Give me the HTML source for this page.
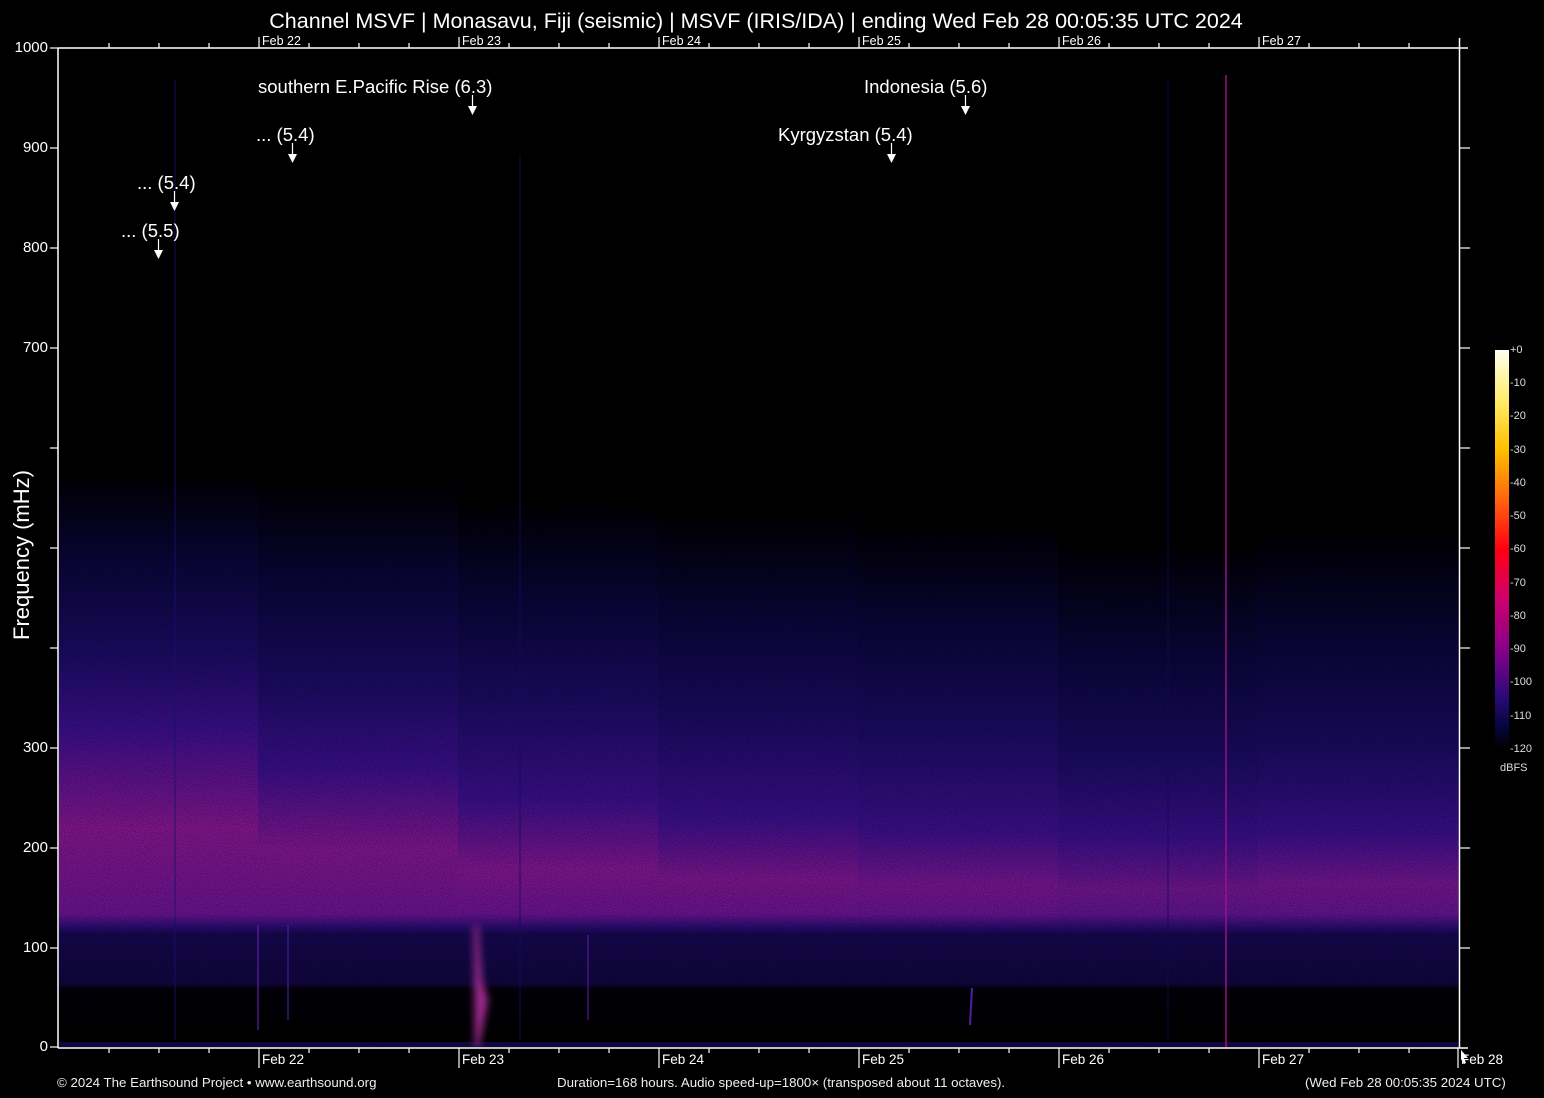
<!DOCTYPE html>
<html><head><meta charset="utf-8"><style>
html,body{margin:0;padding:0;background:#000;}
body{width:1544px;height:1098px;position:relative;overflow:hidden;font-family:"Liberation Sans",Arial,sans-serif;color:#fff;}
.t{position:absolute;white-space:nowrap;}
.yl{position:absolute;left:0;width:48px;text-align:right;font-size:15px;}
</style></head><body>
<svg width="1544" height="1098" style="position:absolute;left:0;top:0" xmlns="http://www.w3.org/2000/svg">
<defs>
<clipPath id="pc"><rect x="59" y="48" width="1400" height="999"/></clipPath>
<filter id="b3" filterUnits="userSpaceOnUse" x="-200" y="-200" width="2000" height="1500"><feGaussianBlur stdDeviation="4"/></filter>
<filter id="noise" filterUnits="userSpaceOnUse" x="0" y="0" width="1544" height="1098"><feTurbulence type="fractalNoise" baseFrequency="0.9" numOctaves="1" seed="3"/><feColorMatrix values="0 0 0 0 0  0 0 0 0 0  0 0 0 0 0  0 0 0 -1.6 1.1"/></filter>
<linearGradient id="cb" x1="0" y1="0" x2="0" y2="1">
<stop offset="0" stop-color="#fffff0"/><stop offset="0.12" stop-color="#ffee70"/><stop offset="0.25" stop-color="#ffc000"/><stop offset="0.38" stop-color="#ff6010"/><stop offset="0.5" stop-color="#ff0010"/><stop offset="0.62" stop-color="#d0006a"/><stop offset="0.75" stop-color="#8a008a"/><stop offset="0.87" stop-color="#2a0a7a"/><stop offset="0.95" stop-color="#050538"/><stop offset="1" stop-color="#000"/>
</linearGradient>
<linearGradient id="g1" x1="0" y1="0" x2="0" y2="1">
<stop offset=".422" stop-color="#000"/><stop offset=".512" stop-color="#0a0538"/><stop offset=".602" stop-color="#1a0b62"/><stop offset=".682" stop-color="#3a0f8a"/><stop offset=".782" stop-color="#84168e"/><stop offset=".867" stop-color="#6a1490"/><stop offset=".880" stop-color="#2a0c70"/><stop offset=".887" stop-color="#160850"/><stop offset=".937" stop-color="#10063e"/><stop offset=".942" stop-color="#020108"/><stop offset="1" stop-color="#000"/>
</linearGradient>
<linearGradient id="g2" x1="0" y1="0" x2="0" y2="1">
<stop offset=".432" stop-color="#000"/><stop offset=".532" stop-color="#0a0538"/><stop offset=".632" stop-color="#1a0b62"/><stop offset=".722" stop-color="#3a0f8a"/><stop offset=".802" stop-color="#80168e"/><stop offset=".867" stop-color="#6a1490"/><stop offset=".880" stop-color="#2a0c70"/><stop offset=".887" stop-color="#160850"/><stop offset=".937" stop-color="#10063e"/><stop offset=".942" stop-color="#020108"/><stop offset="1" stop-color="#000"/>
</linearGradient>
<linearGradient id="g3" x1="0" y1="0" x2="0" y2="1">
<stop offset=".452" stop-color="#000"/><stop offset=".552" stop-color="#0a0538"/><stop offset=".652" stop-color="#1a0b62"/><stop offset=".752" stop-color="#3a0f8a"/><stop offset=".822" stop-color="#80168e"/><stop offset=".867" stop-color="#6a1490"/><stop offset=".880" stop-color="#2a0c70"/><stop offset=".887" stop-color="#160850"/><stop offset=".937" stop-color="#10063e"/><stop offset=".942" stop-color="#020108"/><stop offset="1" stop-color="#000"/>
</linearGradient>
<linearGradient id="g4" x1="0" y1="0" x2="0" y2="1">
<stop offset=".462" stop-color="#000"/><stop offset=".567" stop-color="#0a0538"/><stop offset=".672" stop-color="#1a0b62"/><stop offset=".772" stop-color="#3a0f8a"/><stop offset=".832" stop-color="#7c168e"/><stop offset=".867" stop-color="#6a1490"/><stop offset=".880" stop-color="#2a0c70"/><stop offset=".887" stop-color="#160850"/><stop offset=".937" stop-color="#10063e"/><stop offset=".942" stop-color="#020108"/><stop offset="1" stop-color="#000"/>
</linearGradient>
<linearGradient id="g5" x1="0" y1="0" x2="0" y2="1">
<stop offset=".472" stop-color="#000"/><stop offset=".577" stop-color="#0a0538"/><stop offset=".682" stop-color="#1a0b62"/><stop offset=".782" stop-color="#3a0f8a"/><stop offset=".837" stop-color="#76168e"/><stop offset=".867" stop-color="#661490"/><stop offset=".880" stop-color="#2a0c70"/><stop offset=".887" stop-color="#160850"/><stop offset=".937" stop-color="#10063e"/><stop offset=".942" stop-color="#020108"/><stop offset="1" stop-color="#000"/>
</linearGradient>
<linearGradient id="g6" x1="0" y1="0" x2="0" y2="1">
<stop offset=".492" stop-color="#000"/><stop offset=".602" stop-color="#0a0538"/><stop offset=".712" stop-color="#1a0b62"/><stop offset=".792" stop-color="#3a0f8a"/><stop offset=".842" stop-color="#70168e"/><stop offset=".867" stop-color="#601490"/><stop offset=".880" stop-color="#2a0c70"/><stop offset=".887" stop-color="#160850"/><stop offset=".937" stop-color="#10063e"/><stop offset=".942" stop-color="#020108"/><stop offset="1" stop-color="#000"/>
</linearGradient>
<linearGradient id="g7" x1="0" y1="0" x2="0" y2="1">
<stop offset=".482" stop-color="#000"/><stop offset=".592" stop-color="#0a0538"/><stop offset=".702" stop-color="#1a0b62"/><stop offset=".787" stop-color="#3a0f8a"/><stop offset=".837" stop-color="#74168e"/><stop offset=".867" stop-color="#641490"/><stop offset=".880" stop-color="#2a0c70"/><stop offset=".887" stop-color="#160850"/><stop offset=".937" stop-color="#10063e"/><stop offset=".942" stop-color="#020108"/><stop offset="1" stop-color="#000"/>
</linearGradient>
</defs>
<g clip-path="url(#pc)">
<rect x="58" y="48" width="201" height="999" fill="url(#g1)"/>
<rect x="258" y="48" width="201" height="999" fill="url(#g2)"/>
<rect x="458" y="48" width="201" height="999" fill="url(#g3)"/>
<rect x="658" y="48" width="201" height="999" fill="url(#g4)"/>
<rect x="858" y="48" width="201" height="999" fill="url(#g5)"/>
<rect x="1058" y="48" width="201" height="999" fill="url(#g6)"/>
<rect x="1258" y="48" width="202" height="999" fill="url(#g7)"/>
<rect x="0" y="1042" width="1600" height="5" fill="#120848"/>
<rect x="58" y="48" width="1402" height="1000" filter="url(#noise)" opacity="0.45"/>
<line x1="1226" y1="75" x2="1226" y2="1047" stroke="#a01080" stroke-width="1.5"/>
<line x1="175" y1="80" x2="175" y2="1040" stroke="#1a1070" stroke-width="1.2" opacity="0.7"/>
<line x1="520" y1="155" x2="520" y2="1040" stroke="#160c5a" stroke-width="1.2" opacity="0.7"/>
<line x1="1168" y1="80" x2="1168" y2="1040" stroke="#120c50" stroke-width="1.2" opacity="0.7"/>
<line x1="258" y1="925" x2="258" y2="1030" stroke="#6020a0" stroke-width="1.2"/>
<line x1="288" y1="925" x2="288" y2="1020" stroke="#4a1a90" stroke-width="1.2"/>
<line x1="588" y1="935" x2="588" y2="1020" stroke="#501a90" stroke-width="1.2"/>
<path d="M474,925 L478,925 L482,980 L488,1000 L479,1047 L475,1047 Z" fill="#a02a90" filter="url(#b3)"/>
<line x1="972" y1="988" x2="970" y2="1025" stroke="#5020a0" stroke-width="2"/>
</g>
<g stroke="#fff" stroke-width="1.5" fill="none">
<line x1="58" y1="48" x2="1468" y2="48"/>
<line x1="58" y1="48" x2="58" y2="1048"/>
<line x1="58" y1="1048" x2="1468" y2="1048"/>
<line x1="1459.5" y1="38" x2="1459.5" y2="1048"/>
</g>
<g stroke="#fff" stroke-width="1.2">
<line x1="50" y1="48" x2="58" y2="48"/><line x1="50" y1="148" x2="58" y2="148"/><line x1="50" y1="248" x2="58" y2="248"/><line x1="50" y1="348" x2="58" y2="348"/><line x1="50" y1="448" x2="58" y2="448"/><line x1="50" y1="548" x2="58" y2="548"/><line x1="50" y1="648" x2="58" y2="648"/><line x1="50" y1="748" x2="58" y2="748"/><line x1="50" y1="848" x2="58" y2="848"/><line x1="50" y1="948" x2="58" y2="948"/><line x1="50" y1="1047" x2="58" y2="1047"/>
<line x1="1460" y1="148" x2="1470" y2="148"/><line x1="1460" y1="248" x2="1470" y2="248"/><line x1="1460" y1="348" x2="1470" y2="348"/><line x1="1460" y1="448" x2="1470" y2="448"/><line x1="1460" y1="548" x2="1470" y2="548"/><line x1="1460" y1="648" x2="1470" y2="648"/><line x1="1460" y1="748" x2="1470" y2="748"/><line x1="1460" y1="848" x2="1470" y2="848"/><line x1="1460" y1="948" x2="1470" y2="948"/>
</g>
<g stroke="#fff" stroke-width="1.2">
<line x1="109" y1="1048" x2="109" y2="1053"/><line x1="159" y1="1048" x2="159" y2="1053"/><line x1="209" y1="1048" x2="209" y2="1053"/>
<line x1="259" y1="1048" x2="259" y2="1068"/><line x1="309" y1="1048" x2="309" y2="1053"/><line x1="359" y1="1048" x2="359" y2="1053"/><line x1="409" y1="1048" x2="409" y2="1053"/>
<line x1="459" y1="1048" x2="459" y2="1068"/><line x1="509" y1="1048" x2="509" y2="1053"/><line x1="559" y1="1048" x2="559" y2="1053"/><line x1="609" y1="1048" x2="609" y2="1053"/>
<line x1="659" y1="1048" x2="659" y2="1068"/><line x1="709" y1="1048" x2="709" y2="1053"/><line x1="759" y1="1048" x2="759" y2="1053"/><line x1="809" y1="1048" x2="809" y2="1053"/>
<line x1="859" y1="1048" x2="859" y2="1068"/><line x1="909" y1="1048" x2="909" y2="1053"/><line x1="959" y1="1048" x2="959" y2="1053"/><line x1="1009" y1="1048" x2="1009" y2="1053"/>
<line x1="1059" y1="1048" x2="1059" y2="1068"/><line x1="1109" y1="1048" x2="1109" y2="1053"/><line x1="1159" y1="1048" x2="1159" y2="1053"/><line x1="1209" y1="1048" x2="1209" y2="1053"/>
<line x1="1259" y1="1048" x2="1259" y2="1068"/><line x1="1309" y1="1048" x2="1309" y2="1053"/><line x1="1359" y1="1048" x2="1359" y2="1053"/><line x1="1409" y1="1048" x2="1409" y2="1053"/>
<line x1="1458" y1="1048" x2="1458" y2="1068"/>
<line x1="109" y1="43" x2="109" y2="48"/><line x1="159" y1="43" x2="159" y2="48"/><line x1="209" y1="43" x2="209" y2="48"/>
<line x1="259" y1="37" x2="259" y2="48"/><line x1="309" y1="43" x2="309" y2="48"/><line x1="359" y1="43" x2="359" y2="48"/><line x1="409" y1="43" x2="409" y2="48"/>
<line x1="459" y1="37" x2="459" y2="48"/><line x1="509" y1="43" x2="509" y2="48"/><line x1="559" y1="43" x2="559" y2="48"/><line x1="609" y1="43" x2="609" y2="48"/>
<line x1="659" y1="37" x2="659" y2="48"/><line x1="709" y1="43" x2="709" y2="48"/><line x1="759" y1="43" x2="759" y2="48"/><line x1="809" y1="43" x2="809" y2="48"/>
<line x1="859" y1="37" x2="859" y2="48"/><line x1="909" y1="43" x2="909" y2="48"/><line x1="959" y1="43" x2="959" y2="48"/><line x1="1009" y1="43" x2="1009" y2="48"/>
<line x1="1059" y1="37" x2="1059" y2="48"/><line x1="1109" y1="43" x2="1109" y2="48"/><line x1="1159" y1="43" x2="1159" y2="48"/><line x1="1209" y1="43" x2="1209" y2="48"/>
<line x1="1259" y1="37" x2="1259" y2="48"/><line x1="1309" y1="43" x2="1309" y2="48"/><line x1="1359" y1="43" x2="1359" y2="48"/><line x1="1409" y1="43" x2="1409" y2="48"/>
<line x1="472.5" y1="95" x2="472.5" y2="108"/><line x1="292.5" y1="143" x2="292.5" y2="156"/><line x1="174.5" y1="191" x2="174.5" y2="204"/><line x1="158.5" y1="239" x2="158.5" y2="252"/><line x1="965.5" y1="95" x2="965.5" y2="108"/><line x1="891.5" y1="143" x2="891.5" y2="156"/>
</g>
<g fill="#fff">
<polygon points="468,106 477,106 472.5,115"/><polygon points="288,154 297,154 292.5,163"/><polygon points="170,202 179,202 174.5,211"/><polygon points="154,250 163,250 158.5,259"/><polygon points="961,106 970,106 965.5,115"/><polygon points="887,154 896,154 891.5,163"/>
<polygon points="1461,1050 1468,1058 1464,1058 1466,1063 1464,1064 1462,1059 1461,1061"/>
</g>
<rect x="1495" y="350" width="14" height="398" fill="url(#cb)"/>
</svg>
<div class="t" style="left:0;width:1512px;text-align:center;top:9px;font-size:21.5px;">Channel MSVF | Monasavu, Fiji (seismic) | MSVF (IRIS/IDA) | ending Wed Feb 28 00:05:35 UTC 2024</div>
<div style="font-size:12.5px;">
<div class="t" style="left:262px;top:34px;">Feb 22</div>
<div class="t" style="left:462px;top:34px;">Feb 23</div>
<div class="t" style="left:662px;top:34px;">Feb 24</div>
<div class="t" style="left:862px;top:34px;">Feb 25</div>
<div class="t" style="left:1062px;top:34px;">Feb 26</div>
<div class="t" style="left:1262px;top:34px;">Feb 27</div>
</div>
<div class="yl" style="top:39px;">1000</div>
<div class="yl" style="top:139px;">900</div>
<div class="yl" style="top:239px;">800</div>
<div class="yl" style="top:339px;">700</div>
<div class="yl" style="top:739px;">300</div>
<div class="yl" style="top:839px;">200</div>
<div class="yl" style="top:939px;">100</div>
<div class="yl" style="top:1038px;">0</div>
<div class="t" style="left:22px;top:555px;font-size:22px;transform:translate(-50%,-50%) rotate(-90deg);">Frequency (mHz)</div>
<div style="font-size:18.5px;">
<div class="t" style="left:258px;top:76px;">southern E.Pacific Rise (6.3)</div>
<div class="t" style="left:864px;top:76px;">Indonesia (5.6)</div>
<div class="t" style="left:256px;top:124px;">... (5.4)</div>
<div class="t" style="left:778px;top:124px;">Kyrgyzstan (5.4)</div>
<div class="t" style="left:137px;top:172px;">... (5.4)</div>
<div class="t" style="left:121px;top:220px;">... (5.5)</div>
</div>
<div style="font-size:11px;color:#ddd;">
<div class="t" style="left:1510px;top:344px;">+0</div>
<div class="t" style="left:1510px;top:377px;">-10</div>
<div class="t" style="left:1510px;top:410px;">-20</div>
<div class="t" style="left:1510px;top:444px;">-30</div>
<div class="t" style="left:1510px;top:477px;">-40</div>
<div class="t" style="left:1510px;top:510px;">-50</div>
<div class="t" style="left:1510px;top:543px;">-60</div>
<div class="t" style="left:1510px;top:577px;">-70</div>
<div class="t" style="left:1510px;top:610px;">-80</div>
<div class="t" style="left:1510px;top:643px;">-90</div>
<div class="t" style="left:1510px;top:676px;">-100</div>
<div class="t" style="left:1510px;top:710px;">-110</div>
<div class="t" style="left:1510px;top:743px;">-120</div>
<div class="t" style="left:1500px;top:762px;">dBFS</div>
</div>
<div style="font-size:13.5px;">
<div class="t" style="left:262px;top:1052px;">Feb 22</div>
<div class="t" style="left:462px;top:1052px;">Feb 23</div>
<div class="t" style="left:662px;top:1052px;">Feb 24</div>
<div class="t" style="left:862px;top:1052px;">Feb 25</div>
<div class="t" style="left:1062px;top:1052px;">Feb 26</div>
<div class="t" style="left:1262px;top:1052px;">Feb 27</div>
<div class="t" style="left:1461px;top:1052px;">Feb 28</div>
</div>
<div style="font-size:13.3px;color:#eee;">
<div class="t" style="left:57px;top:1075px;">© 2024 The Earthsound Project • www.earthsound.org</div>
<div class="t" style="left:557px;top:1075px;">Duration=168 hours. Audio speed-up=1800× (transposed about 11 octaves).</div>
<div class="t" style="left:1305px;top:1075px;">(Wed Feb 28 00:05:35 2024 UTC)</div>
</div>
</body></html>
